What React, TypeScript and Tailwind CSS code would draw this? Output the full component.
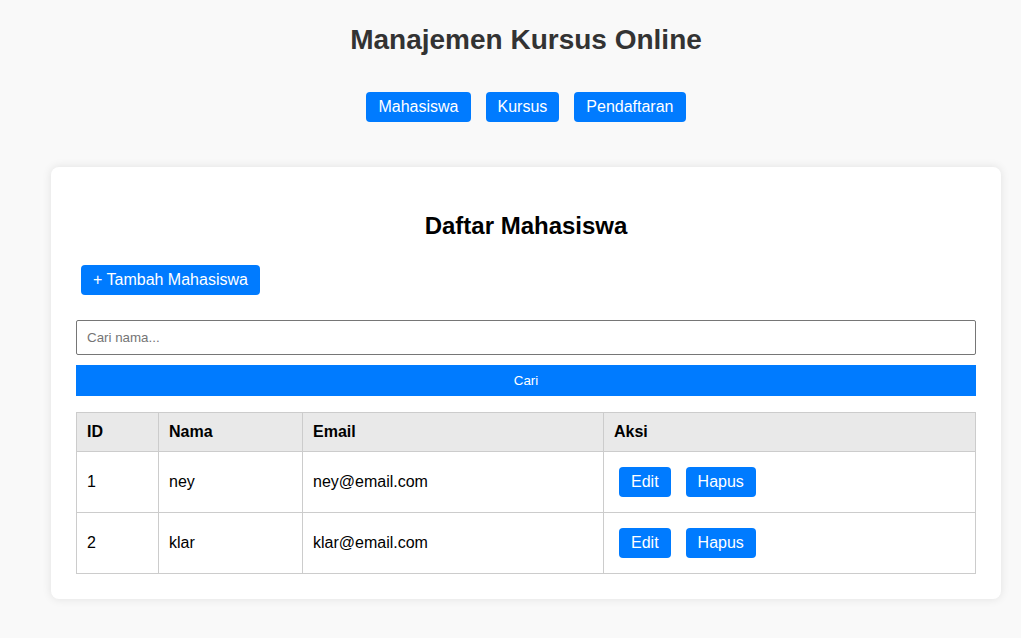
import React from 'react'

const students = [
  { id: 1, nama: 'ney', email: 'ney@email.com' },
  { id: 2, nama: 'klar', email: 'klar@email.com' },
]

const btn = 'bg-[#007bff] text-white rounded-[4px] px-3 h-[30px] text-[16px] leading-[18px]'

export default function App() {
  return (
    <div className="min-h-[638px] bg-[#f9f9f9] font-['Liberation_Sans',Arial,sans-serif] pl-[31px] pt-[24px] pb-[39px]">
      <h1 className="text-center text-[28px] leading-[32px] font-bold text-[#333]">Manajemen Kursus Online</h1>

      {/* Nav */}
      <nav className="flex justify-center gap-[15px] mt-[36px]">
        <button className={btn}>Mahasiswa</button>
        <button className={btn}>Kursus</button>
        <button className={btn}>Pendaftaran</button>
      </nav>

      {/* Card */}
      <div className="w-[950px] mx-auto mt-[45px] bg-white rounded-[8px] shadow-[0_0_10px_rgba(0,0,0,0.1)] p-[25px]">
        <h2 className="text-center text-[24px] leading-[28px] font-bold text-black mt-[20px]">Daftar Mahasiswa</h2>
        <button className={`${btn} mt-[25px] ml-[5px]`}>+ Tambah Mahasiswa</button>

        <div className="mt-[25px] flex flex-col gap-[10px]">
          <input
            className="w-full h-[35px] border border-[#767676] rounded-[2px] px-[10px] text-[13.33px] placeholder:text-[#757575] outline-none"
            placeholder="Cari nama..."
          />
          <button className="w-full h-[31px] bg-[#007bff] text-white text-[13.33px]">Cari</button>
        </div>

        {/* Table */}
        <table className="w-full mt-[16px] border-collapse text-[16px] leading-[18px] text-black">
          <thead>
            <tr className="bg-[#e9e9e9]">
              <th className="w-[82px] border border-[#ccc] px-[10px] py-[10px] text-left font-bold">ID</th>
              <th className="w-[144px] border border-[#ccc] px-[10px] py-[10px] text-left font-bold">Nama</th>
              <th className="w-[301px] border border-[#ccc] px-[10px] py-[10px] text-left font-bold">Email</th>
              <th className="border border-[#ccc] px-[10px] py-[10px] text-left font-bold">Aksi</th>
            </tr>
          </thead>
          <tbody>
            {students.map((s) => (
              <tr key={s.id}>
                <td className="border border-[#ccc] px-[10px] py-[10px]">{s.id}</td>
                <td className="border border-[#ccc] px-[10px] py-[10px]">{s.nama}</td>
                <td className="border border-[#ccc] px-[10px] py-[10px]">{s.email}</td>
                <td className="border border-[#ccc] px-[10px] py-[10px]">
                  <div className="flex gap-[15px] py-[5px] pl-[5px]">
                    <button className={btn}>Edit</button>
                    <button className={btn}>Hapus</button>
                  </div>
                </td>
              </tr>
            ))}
          </tbody>
        </table>
      </div>
    </div>
  )
}
